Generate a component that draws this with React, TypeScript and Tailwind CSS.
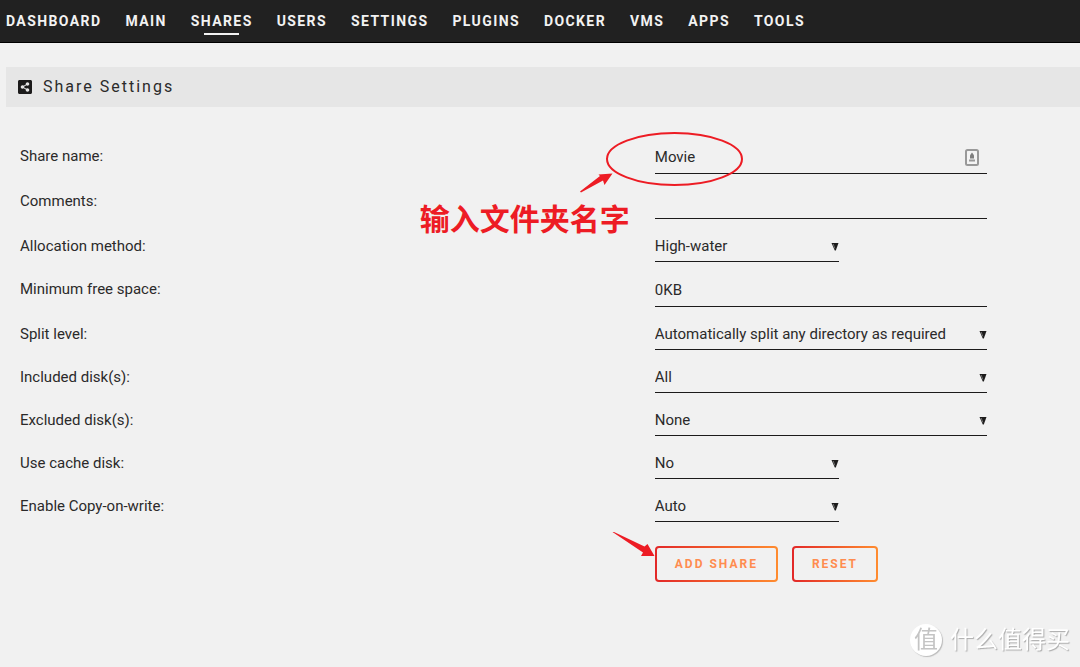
import { useState } from 'react';
import { FaShareAltSquare } from 'react-icons/fa';

const navItems = ['Dashboard', 'Main', 'Shares', 'Users', 'Settings', 'Plugins', 'Docker', 'VMs', 'Apps', 'Tools'];

type Field = {
  id: string;
  label: string;
  kind: 'text' | 'select';
  value: string;
  options?: string[];
  narrow?: boolean;
};

const fields: Field[] = [
  { id: 'shareName', label: 'Share name:', kind: 'text', value: 'Movie' },
  { id: 'shareComment', label: 'Comments:', kind: 'text', value: '' },
  { id: 'shareAllocator', label: 'Allocation method:', kind: 'select', value: 'High-water', options: ['High-water', 'Fill-up', 'Most-free'], narrow: true },
  { id: 'shareFloor', label: 'Minimum free space:', kind: 'text', value: '0KB' },
  { id: 'shareSplitLevel', label: 'Split level:', kind: 'select', value: 'Automatically split any directory as required', options: ['Automatically split any directory as required', 'Manual'] },
  { id: 'shareInclude', label: 'Included disk(s):', kind: 'select', value: 'All', options: ['All', 'disk1', 'disk2'] },
  { id: 'shareExclude', label: 'Excluded disk(s):', kind: 'select', value: 'None', options: ['None', 'disk1', 'disk2'] },
  { id: 'shareUseCache', label: 'Use cache disk:', kind: 'select', value: 'No', options: ['No', 'Yes', 'Only', 'Prefer'], narrow: true },
  { id: 'shareCOW', label: 'Enable Copy-on-write:', kind: 'select', value: 'Auto', options: ['Auto', 'No'], narrow: true },
];

const NavBar = () => {
  const [active, setActive] = useState('Shares');

  return (
    <nav className="flex h-[43px] items-start gap-6 border-b border-black bg-[#212121] pl-1.5 pt-[11px]">
      {navItems.map((item) => (
        <a
          key={item}
          href={`#${item}`}
          onClick={() => setActive(item)}
          className="flex flex-col items-center text-[14px] leading-[20px] font-bold uppercase tracking-widest text-[#f2f2f2]"
        >
          {item}
          {active === item && <span className="mt-0.5 h-0.5 w-[35px] bg-[#f2f2f2]" />}
        </a>
      ))}
    </nav>
  );
};

const KeyIcon = () => (
  <svg className="absolute right-2 top-2" width="14" height="17" viewBox="0 0 14 17">
    <rect x="1" y="1" width="12" height="15" rx="1.5" fill="#f4f4f4" stroke="#999" strokeWidth="2" />
    <path d="M7 3.5 L9 6.2 V9.4 H5 V6.2 Z" fill="#7f7f7f" />
    <path d="M4 11.5 H10" stroke="#999" strokeWidth="2" />
  </svg>
);

const NameNote = () => (
  <div className="pointer-events-none absolute -left-[235px] -top-[9px] w-[326px] text-[#ed1c24]">
    <svg className="block" width="326" height="70" viewBox="0 0 326 70">
      <ellipse cx="254.5" cy="27" rx="67.5" ry="26" fill="none" stroke="#ed1c24" strokeWidth="2" />
      <path d="M160 59.5 L180 44 L178.5 42.5 L192.5 41.5 L184.5 53 L183 48.5 L161 60.5 Z" fill="#ed1c24" />
    </svg>
    <p className="text-[30px] leading-[36px] font-bold">输入文件夹名字</p>
  </div>
);

const FieldRow = ({ field }: { field: Field }) => {
  const [value, setValue] = useState(field.value);
  const isName = field.id === 'shareName';

  if (field.kind === 'text') {
    return (
      <div className="grid grid-cols-[3fr_2fr] items-end">
        <label htmlFor={field.id} className="pb-2 leading-[20px]">{field.label}</label>
        <div className="relative w-[332px]">
          <input
            id={field.id}
            type="text"
            value={value}
            onChange={(e) => setValue(e.target.value)}
            className="block h-[33px] w-full border-b border-[#1c1b1b] bg-transparent outline-none"
          />
          {isName && <KeyIcon />}
          {isName && <NameNote />}
        </div>
      </div>
    );
  }

  return (
    <div className="grid grid-cols-[3fr_2fr] items-end">
      <label htmlFor={field.id} className="pb-1.5 leading-[20px]">{field.label}</label>
      <div className={field.narrow ? 'relative w-[184px]' : 'relative w-[332px]'}>
        <select
          id={field.id}
          value={value}
          onChange={(e) => setValue(e.target.value)}
          className="block h-[31px] w-full appearance-none border-b border-[#1c1b1b] bg-transparent outline-none"
        >
          {field.options?.map((o) => <option key={o}>{o}</option>)}
        </select>
        <svg className="pointer-events-none absolute right-0 top-3" width="8" height="8" viewBox="0 0 8 8">
          <path d="M0.5 0 H7.5 L4.8 7.5 H3.8 Z" fill="#1c1b1b" />
          <path d="M2.2 1 L3.8 5.5" stroke="#8a8a8a" strokeWidth="0.8" />
        </svg>
      </div>
    </div>
  );
};

const buttonClass =
  'h-9 rounded border-2 border-transparent px-[18px] text-[12px] font-bold uppercase tracking-[2px] text-[#ff8c4f] [background:linear-gradient(#f1f1f1,#f1f1f1)_padding-box,linear-gradient(90deg,#e22828,#ff8c2f)_border-box]';

const Watermark = () => (
  <div className="pointer-events-none fixed bottom-[11px] right-2.5 flex items-center gap-2">
    <span className="flex size-8 items-center justify-center rounded-full bg-white text-[24px] leading-none text-[#c4c4c4] shadow-[1px_1px_1px_#bbb]">
      值
    </span>
    <span className="text-[24px] leading-[32px] text-white [text-shadow:1px_1px_1px_#aaa]">什么值得买</span>
  </div>
);

export default function App() {
  return (
    <div className="min-h-screen bg-[#f1f1f1] text-[15px] text-[#2b2a2a] [font-family:Roboto,'Noto_Sans_CJK_SC',sans-serif]">
      <NavBar />
      <main className="pl-1.5 pt-6">
        <h1 className="flex h-10 items-center gap-2.5 bg-[#e6e6e6] pl-[11px] text-[16px] tracking-[2px]">
          <FaShareAltSquare size={16} color="#1c1b1b" />
          Share Settings
        </h1>
        <form className="mt-[34px] pl-3.5 pr-0.5" onSubmit={(e) => e.preventDefault()}>
          <div className="flex flex-col gap-3">
            {fields.map((f) => <FieldRow key={f.id} field={f} />)}
          </div>
          <div className="mt-6 grid grid-cols-[3fr_2fr]">
            <div className="relative col-start-2 flex gap-3.5">
              <svg className="pointer-events-none absolute -left-[43px] -top-[15px]" width="44" height="28" viewBox="0 0 44 28">
                <path d="M0.5 1 L2 1 L32.5 15.5 L35.5 13 L42.5 25 L29 25 L31 21.5 Z" fill="#ed1c24" />
              </svg>
              <button type="submit" className={buttonClass}>Add Share</button>
              <button type="reset" className={buttonClass}>Reset</button>
            </div>
          </div>
        </form>
      </main>
      <Watermark />
    </div>
  );
}
